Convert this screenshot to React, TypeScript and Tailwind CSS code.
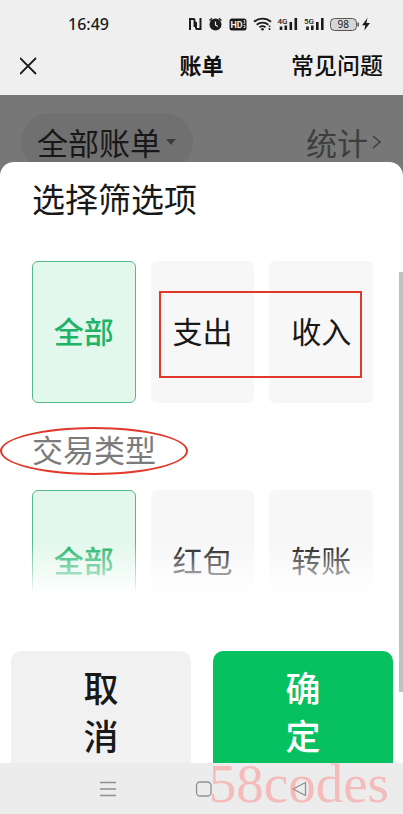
import React, { useState } from "react";

const flowOptions = ["全部", "支出", "收入"];
const typeOptions = ["全部", "红包", "转账"];

const StatusIcons = () => (
  <svg width="182" height="20" viewBox="0 0 182 20" fill="none" aria-hidden="true">
    {/* nfc */}
    <path d="M0 16V4h4.500q2 0 2 2v7h-2V6H2v10zM12.500 4v12H8q-2 0-2-2V8h2v6h2.500V4z" fill="#1c1c1c" />
    {/* alarm */}
    <circle cx="26.500" cy="10.500" r="6" fill="#1c1c1c" />
    <path d="M20.500 6.500l2.500-2.200M32.500 6.500l-2.500-2.200" stroke="#1c1c1c" strokeWidth="1.300" />
    <path d="M26.500 7.500v3.500l2.300 1.500" stroke="#eee" strokeWidth="1.200" />
    {/* hd */}
    <rect x="40.500" y="4.500" width="17" height="12" rx="2.500" fill="#1c1c1c" />
    <text x="41.500" y="13.500" fontSize="9" fontWeight="700" fill="#eee" fontFamily="Roboto, sans-serif">
      HD
    </text>
    <path d="M54.500 6.500h1.200v3h-1.200M54.500 11.500h1.500v2h-1.500" stroke="#eee" strokeWidth="0.800" />
    {/* wifi */}
    <path
      d="M65 7.700a13 13 0 0 1 17 0M67.700 10.700a9 9 0 0 1 11.600 0M70.500 13.300a4.800 4.800 0 0 1 6 0"
      stroke="#1c1c1c"
      strokeWidth="1.800"
    />
    <circle cx="73.500" cy="15.200" r="1.300" fill="#1c1c1c" />
    <path d="M80.500 11.500v1.500M80.500 14v2" stroke="#1c1c1c" strokeWidth="1.600" />
    {/* signals */}
    <path
      d="M92 12.500V16M96.800 11.500V16M101.800 8v8M106.800 4V16M118.500 12.500V16M123.300 11.500V16M128.300 8v8M133.300 4V16"
      stroke="#1c1c1c"
      strokeWidth="2.600"
    />
    <text x="88.500" y="9.500" fontSize="8" fontWeight="500" fill="#1c1c1c" fontFamily="Roboto, sans-serif">
      4G
    </text>
    <text x="115" y="9.500" fontSize="8" fontWeight="500" fill="#1c1c1c" fontFamily="Roboto, sans-serif">
      5G
    </text>
    {/* battery */}
    <rect x="141.500" y="4.500" width="26" height="12" rx="4" fill="#d6d6d6" stroke="#555" />
    <path d="M169.200 8.500v4" stroke="#555" strokeWidth="1.500" />
    <text x="148.500" y="14" fontSize="10" fill="#1c1c1c" fontFamily="Noto Sans, sans-serif">
      98
    </text>
    <path d="M178.500 4l-5.500 7.300h3.300l-1 5.200 5.700-7.500h-3.600z" fill="#1c1c1c" />
  </svg>
);

type OptionGridProps = {
  options: string[];
  selected: string;
  onSelect: (option: string) => void;
};

const OptionGrid = ({ options, selected, onSelect }: OptionGridProps) => (
  <div className="grid grid-cols-3 gap-[15px]">
    {options.map((option) => (
      <button
        key={option}
        type="button"
        aria-pressed={option === selected}
        onClick={() => onSelect(option)}
        className={
          option === selected
            ? "h-[142px] rounded-md border border-[#57b98a] bg-[#e3f8ec] pb-1 text-[30px] font-medium text-[#1fb368]"
            : "h-[142px] rounded-md bg-[#f7f7f7] pb-1 text-[30px] text-[#181818]"
        }
      >
        {option}
      </button>
    ))}
  </div>
);

const App = () => {
  const [flow, setFlow] = useState("全部");
  const [type, setType] = useState("全部");

  return (
    <div className="bg-[#777] font-['Noto_Sans_CJK_SC',sans-serif]">
      <header className="bg-[#efefef]">
        <div className="flex h-12 items-center justify-between pr-8 pl-[68px]">
          <span className="font-['Noto_Sans',sans-serif] text-base font-medium text-[#1c1c1c]">16:49</span>
          <StatusIcons />
        </div>
        <div className="grid h-[47px] grid-cols-3 items-start px-5 leading-8 text-[#111]">
          <button type="button" aria-label="关闭" className="flex h-9 items-center">
            <svg width="18" height="18" viewBox="2 0 18 18" stroke="#1c1c1c" strokeWidth="1.800">
              <path d="M1 1l16 16M17 1L1 17" className="translate-x-px" />
            </svg>
          </button>
          <h1 className="text-center text-[22px] leading-8 font-bold">账单</h1>
          <a href="#" className="justify-self-end text-[23px] leading-8 font-medium whitespace-nowrap">
            常见问题
          </a>
        </div>
      </header>

      <div className="flex h-[67px] items-start justify-between px-[21px] pt-[18px] text-[31px] leading-[58px]">
        <button type="button" className="flex h-[58px] items-center gap-1 rounded-full bg-[#707070] px-4 text-[#181818]">
          全部账单
          <svg width="12" height="6" viewBox="0 0 12 6" fill="#3c3c3c">
            <path d="M1 0h10L6 6z" />
          </svg>
        </button>
        <a href="#" className="flex items-center gap-1 text-[#3e3e3e]">
          统计
          <svg width="10" height="16" viewBox="0 0 10 16" fill="none" stroke="#3e3e3e" strokeWidth="1.500">
            <path d="M1 2l7 6-7 6" />
          </svg>
        </a>
      </div>

      <main className="relative rounded-t-[14px] bg-white pt-3">
        <h2 className="pl-8 text-[33px] leading-[48px] text-[#181818]">选择筛选项</h2>

        <div className="mt-[39px] pr-[30px] pl-8">
          <div className="relative">
            <OptionGrid options={flowOptions} selected={flow} onSelect={setFlow} />
            <div className="pointer-events-none absolute top-[30px] right-[11px] left-[127px] h-[87px] border-2 border-[#e0392b]" />
          </div>
          <div className="relative mt-6 w-fit pb-1">
            <h3 className="text-[31px] leading-[44px] text-[#7b7b7b]">交易类型</h3>
            <div className="pointer-events-none absolute inset-y-0 -right-8 -left-8 rounded-[50%] border-2 border-[#e0392b]" />
          </div>
          <div className="relative mt-[15px] h-[101px] overflow-hidden">
            <OptionGrid options={typeOptions} selected={type} onSelect={setType} />
            <div className="pointer-events-none absolute inset-x-0 bottom-0 h-12 bg-linear-to-b from-white/0 to-white/90" />
          </div>
        </div>

        <div className="mt-[60px] grid h-28 grid-cols-2 gap-[22px] overflow-hidden pr-[10px] pl-[11px] text-[35px] leading-[48px] font-medium">
          <button type="button" className="flex h-32 justify-center rounded-[10px] bg-[#f1f1f1] pt-3 text-[#181818]">
            <span className="w-9">取消</span>
          </button>
          <button type="button" className="flex h-32 justify-center rounded-[10px] bg-[#07c160] pt-3 text-white">
            <span className="w-9">确定</span>
          </button>
        </div>

        <div className="absolute top-[110px] right-0 h-[420px] w-1 bg-[#c1c1c1]" />
      </main>

      <nav className="relative grid h-[51px] grid-cols-3 items-center bg-[#ececec] pr-[55px] pl-[60px]">
        <button type="button" aria-label="最近任务" className="flex justify-center">
          <svg width="18" height="18" viewBox="0 0 18 18" stroke="#909090" strokeWidth="1.300">
            <path d="M1 2.500h16M1 9h16M1 15.500h16" />
          </svg>
        </button>
        <button type="button" aria-label="主屏幕" className="flex justify-center">
          <svg width="18" height="18" viewBox="0 0 18 18" fill="none" stroke="#909090" strokeWidth="1.300">
            <rect x="1.500" y="2" width="14.500" height="14" rx="3.500" />
          </svg>
        </button>
        <button type="button" aria-label="返回" className="flex justify-center">
          <svg width="18" height="18" viewBox="0 0 18 18" fill="none" stroke="#909090" strokeWidth="1.300">
            <path d="M2 9l12.500-6.500v13z" strokeLinejoin="round" />
          </svg>
        </button>
        <span className="pointer-events-none absolute right-[14px] bottom-1.5 font-['Liberation_Serif',serif] text-[55px] leading-[48px] text-[#ff8080]/45">
          58codes
        </span>
      </nav>
    </div>
  );
};

export default App;
